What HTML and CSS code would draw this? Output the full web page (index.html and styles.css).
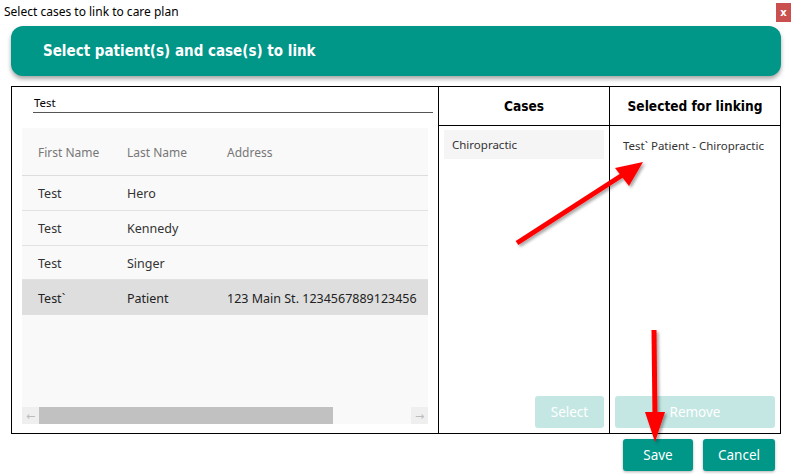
FILE: index.html
```html
<!DOCTYPE html>
<html lang="en">
<head>
    <meta charset="UTF-8">
    <title>Select cases to link to care plan</title>
    <link rel="stylesheet" href="styles.css">
</head>
<body>
    <div class="titlebar">
        <span class="title">Select cases to link to care plan</span>
        <button class="close">x</button>
    </div>

    <div class="header">Select patient(s) and case(s) to link</div>

    <div class="panel">
        <div class="col patients">
            <div class="search">Test</div>
            <div class="grid">
                <div class="row head">
                    <span class="c1">First Name</span>
                    <span class="c2">Last Name</span>
                    <span class="c3">Address</span>
                </div>
                <div class="row">
                    <span class="c1">Test</span>
                    <span class="c2">Hero</span>
                    <span class="c3"></span>
                </div>
                <div class="row">
                    <span class="c1">Test</span>
                    <span class="c2">Kennedy</span>
                    <span class="c3"></span>
                </div>
                <div class="row">
                    <span class="c1">Test</span>
                    <span class="c2">Singer</span>
                    <span class="c3"></span>
                </div>
                <div class="row selected">
                    <span class="c1">Test`</span>
                    <span class="c2">Patient</span>
                    <span class="c3">123 Main St. 1234567889123456</span>
                </div>
                <div class="filler"></div>
                <div class="scrollbar">
                    <span class="arrow">&#8592;</span>
                    <span class="thumb"></span>
                    <span class="track"></span>
                    <span class="arrow">&#8594;</span>
                </div>
            </div>
        </div>

        <div class="col cases">
            <div class="col-title">Cases</div>
            <div class="col-body">
                <div class="case">Chiropractic</div>
                <button class="btn disabled small">Select</button>
            </div>
        </div>

        <div class="col linked">
            <div class="col-title">Selected for linking</div>
            <div class="col-body">
                <div class="link">Test` Patient - Chiropractic</div>
                <button class="btn disabled wide">Remove</button>
            </div>
        </div>
    </div>

    <div class="footer">
        <button class="btn">Save</button>
        <button class="btn">Cancel</button>
    </div>

    <svg class="arrows" width="791" height="474" viewBox="0 0 791 474">
        <defs>
            <filter id="shade" x="-20%" y="-20%" width="140%" height="140%">
                <feDropShadow dx="2" dy="2" stdDeviation="1.5" flood-color="#000" flood-opacity="0.35"/>
            </filter>
        </defs>
        <g filter="url(#shade)" fill="#ff0000" stroke="none">
            <line x1="517" y1="243" x2="624" y2="174" stroke="#ff0000" stroke-width="5"/>
            <polygon points="643,162 615,168 629,186"/>
            <line x1="654" y1="330" x2="655" y2="418" stroke="#ff0000" stroke-width="5"/>
            <polygon points="645,412 665,412 655,442"/>
        </g>
    </svg>
</body>
</html>
```

FILE: styles.css
```css
* {
    margin: 0;
    padding: 0;
    box-sizing: border-box;
}

body {
    width: 791px;
    height: 474px;
    position: relative;
    font-family: "Noto Sans", "DejaVu Sans", sans-serif;
    font-size: 12px;
    color: #333;
    background: #fff;
    overflow: hidden;
}

.titlebar {
    height: 24px;
    display: flex;
    justify-content: space-between;
    align-items: flex-start;
}

.title {
    padding: 3px 0 0 4px;
    font-size: 12px;
    color: #000;
}

.close {
    margin-top: 3px;
    width: 15px;
    height: 19px;
    border: none;
    background: #c9504f;
    color: #fff;
    font-weight: bold;
    font-size: 10px;
    font-family: "DejaVu Sans", sans-serif;
}

.header {
    margin: 2px 10px 0 11px;
    height: 50px;
    border-radius: 12px;
    background: #009688;
    box-shadow: 0 3px 4px rgba(0, 0, 0, 0.35);
    padding-left: 32px;
    line-height: 50px;
    color: #fff;
    font-family: "DejaVu Sans Condensed", "DejaVu Sans", sans-serif;
    font-weight: bold;
    font-size: 15px;
}

.panel {
    margin: 10px 0 0 11px;
    width: 770px;
    height: 348px;
    border: 1px solid #000;
    display: grid;
    grid-template-columns: 427px 171px 1fr;
}

.col {
    display: flex;
    flex-direction: column;
    min-height: 0;
}

.patients {
    border-right: 1px solid #000;
    padding: 0 5px 9px 10px;
}

.cases {
    border-right: 1px solid #000;
}

.search {
    margin-left: 11px;
    height: 26px;
    padding: 8px 0 0 1px;
    border-bottom: 1px solid #555;
    color: #000;
    font-size: 11.5px;
}

.grid {
    margin-top: 15px;
    width: 406px;
    flex: 1;
    background: #f9f9f9;
    display: flex;
    flex-direction: column;
}

.row {
    height: 34.75px;
    flex-shrink: 0;
    display: flex;
    align-items: center;
    padding-top: 2px;
    border-bottom: 1px solid #e2e2e2;
    font-size: 12.5px;
}

.row.head {
    height: 48px;
    padding-top: 1px;
    border-bottom: 1px solid #ddd;
    color: #777;
    font-size: 12px;
}

.row.selected {
    background: #dedede;
    border-bottom: none;
    color: #222;
}

.c1 {
    width: 105px;
    padding-left: 16px;
}

.c2 {
    width: 100px;
}

.filler {
    flex: 1;
}

.scrollbar {
    height: 17px;
    display: flex;
    align-items: stretch;
}

.arrow {
    width: 17px;
    background: #efefef;
    color: #bbb;
    font-size: 11px;
    text-align: center;
    line-height: 17px;
}

.thumb {
    width: 294px;
    background: #c1c1c1;
}

.track {
    flex: 1;
}

.col-title {
    height: 39px;
    border-bottom: 1px solid #000;
    text-align: center;
    line-height: 38px;
    color: #000;
    font-family: "DejaVu Sans Condensed", "DejaVu Sans", sans-serif;
    font-weight: bold;
    font-size: 13.6px;
}

.col-body {
    flex: 1;
    padding: 4px 5px 5px 5px;
    display: flex;
    flex-direction: column;
}

.case {
    height: 29px;
    background: #f5f5f5;
    padding-left: 8px;
    line-height: 29px;
    font-size: 11.5px;
}

.link {
    padding: 8px 0 0 8px;
    font-size: 11.5px;
}

.btn {
    height: 32px;
    width: 70px;
    border: none;
    border-radius: 3px;
    background: #009688;
    color: #fff;
    font-family: "Noto Sans", sans-serif;
    font-size: 13.5px;
    box-shadow: 0 1px 3px rgba(0, 0, 0, 0.3);
}

.btn.disabled {
    margin-top: auto;
    background: #c4e7e3;
    box-shadow: none;
}

.btn.small {
    align-self: flex-end;
    width: 69px;
}

.btn.wide {
    width: 160px;
}

.footer {
    margin: 5px 16px 0 0;
    display: flex;
    justify-content: flex-end;
    gap: 10px;
}

.footer .btn:last-child {
    width: 72px;
}

.arrows {
    position: absolute;
    left: 0;
    top: 0;
    pointer-events: none;
}
```
